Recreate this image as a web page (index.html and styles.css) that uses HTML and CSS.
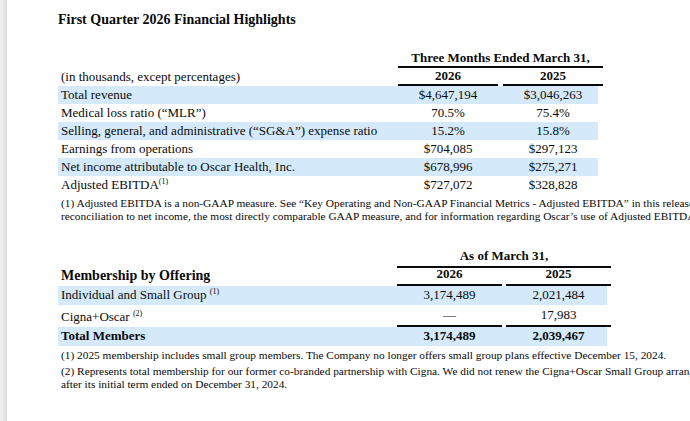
FILE: index.html
```html
<!DOCTYPE html>
<html lang="en">
<head>
    <meta charset="UTF-8">
    <meta name="viewport" content="width=device-width, initial-scale=1.0">
    <title>First Quarter 2026 Financial Highlights</title>
    <link rel="stylesheet" href="styles.css">
</head>
<body>
    <div class="viewer">
        <div class="gutter"></div>
        <div class="page">
            <h1>First Quarter 2026 Financial Highlights</h1>

            <div class="fin fin-q">
                <div class="row head">
                    <div class="label"></div>
                    <div class="span rule">Three Months Ended March 31,</div>
                </div>
                <div class="row head">
                    <div class="label">(in thousands, except percentages)</div>
                    <div class="num rule">2026</div>
                    <div class="num rule">2025</div>
                </div>
                <div class="row shade">
                    <div class="label">Total revenue</div>
                    <div class="num">$4,647,194</div>
                    <div class="num">$3,046,263</div>
                </div>
                <div class="row">
                    <div class="label">Medical loss ratio (“MLR”)</div>
                    <div class="num">70.5%</div>
                    <div class="num">75.4%</div>
                </div>
                <div class="row shade">
                    <div class="label">Selling, general, and administrative (“SG&amp;A”) expense ratio</div>
                    <div class="num">15.2%</div>
                    <div class="num">15.8%</div>
                </div>
                <div class="row">
                    <div class="label">Earnings from operations</div>
                    <div class="num">$704,085</div>
                    <div class="num">$297,123</div>
                </div>
                <div class="row shade">
                    <div class="label">Net income attributable to Oscar Health, Inc.</div>
                    <div class="num">$678,996</div>
                    <div class="num">$275,271</div>
                </div>
                <div class="row">
                    <div class="label">Adjusted EBITDA<sup>(1)</sup></div>
                    <div class="num">$727,072</div>
                    <div class="num">$328,828</div>
                </div>
            </div>
            <p class="note">(1) Adjusted EBITDA is a non-GAAP measure. See “Key Operating and Non-GAAP Financial Metrics - Adjusted EBITDA” in this release for a<br>reconciliation to net income, the most directly comparable GAAP measure, and for information regarding Oscar’s use of Adjusted EBITDA.</p>

            <div class="fin fin-m">
                <div class="row head">
                    <div class="label"></div>
                    <div class="span rule">As of March 31,</div>
                </div>
                <div class="row head years">
                    <div class="label section">Membership by Offering</div>
                    <div class="num rule">2026</div>
                    <div class="num rule">2025</div>
                </div>
                <div class="row shade">
                    <div class="label">Individual and Small Group <sup>(1)</sup></div>
                    <div class="num">3,174,489</div>
                    <div class="num">2,021,484</div>
                </div>
                <div class="row ruled">
                    <div class="label">Cigna+Oscar <sup>(2)</sup></div>
                    <div class="num rule">—</div>
                    <div class="num rule">17,983</div>
                </div>
                <div class="row shade total">
                    <div class="label">Total Members</div>
                    <div class="num">3,174,489</div>
                    <div class="num">2,039,467</div>
                </div>
            </div>
            <p class="note">(1) 2025 membership includes small group members. The Company no longer offers small group plans effective December 15, 2024.</p>
            <p class="note">(2) Represents total membership for our former co-branded partnership with Cigna. We did not renew the Cigna+Oscar Small Group arrangement<br>after its initial term ended on December 31, 2024.</p>
        </div>
    </div>
</body>
</html>
```

FILE: styles.css
```css
html, body {
    margin: 0;
    height: 421px;
    overflow: hidden;
}
body {
    font-family: "Liberation Serif", "Times New Roman", serif;
    color: #0a0a0a;
    background: #fff;
}
.viewer {
    display: flex;
    height: 421px;
}
.gutter {
    flex: none;
    width: 7px;
    background: linear-gradient(to right, #f4f4f4, #e6e6e6 60%, #d9d9d9);
}
.page {
    flex: none;
    width: 760px;
    padding: 12px 0 0 51px;
}
h1 {
    margin: 0 0 22px;
    font-size: 14px;
    line-height: 16px;
    font-weight: bold;
}
.fin {
    font-size: 13px;
}
.row {
    display: grid;
    height: 18px;
    align-items: end;
}
.fin-q .row {
    width: 540px;
    grid-template-columns: 335px 100px 100px;
    column-gap: 5px;
}
.fin-m .row {
    width: 549px;
    grid-template-columns: 335px 105px 105px;
    column-gap: 4px;
    height: 19px;
}
.fin-m .row:first-child {
    height: 18px;
}
.fin-m .years {
    height: 20px;
}
.fin-m .ruled {
    height: 22px;
}
.row > div {
    line-height: 16px;
    padding-bottom: 1px;
    white-space: nowrap;
}
.fin-m .row > div {
    padding-bottom: 2px;
}
.label {
    padding-left: 3px;
}
.num {
    text-align: center;
}
.span {
    grid-column: 2 / 4;
    text-align: center;
}
.head > div {
    font-weight: bold;
}
.head .label {
    font-weight: normal;
}
.head .section {
    font-weight: bold;
    font-size: 14px;
}
.fin .rule {
    border-bottom: 2px solid #0a0a0a;
    padding-bottom: 0;
}
.shade {
    background: #d4eafb;
}
.total > div {
    font-weight: bold;
}
sup {
    font-size: 8px;
    line-height: 0;
    vertical-align: 5px;
}
.note {
    margin: 3px 0 0;
    padding-left: 3px;
    font-size: 11.35px;
    line-height: 13px;
    white-space: nowrap;
}
.fin-m {
    margin-top: 25px;
}
.fin-m + .note {
    margin-top: 3px;
}
.note + .note {
    margin-top: 3px;
}
```
